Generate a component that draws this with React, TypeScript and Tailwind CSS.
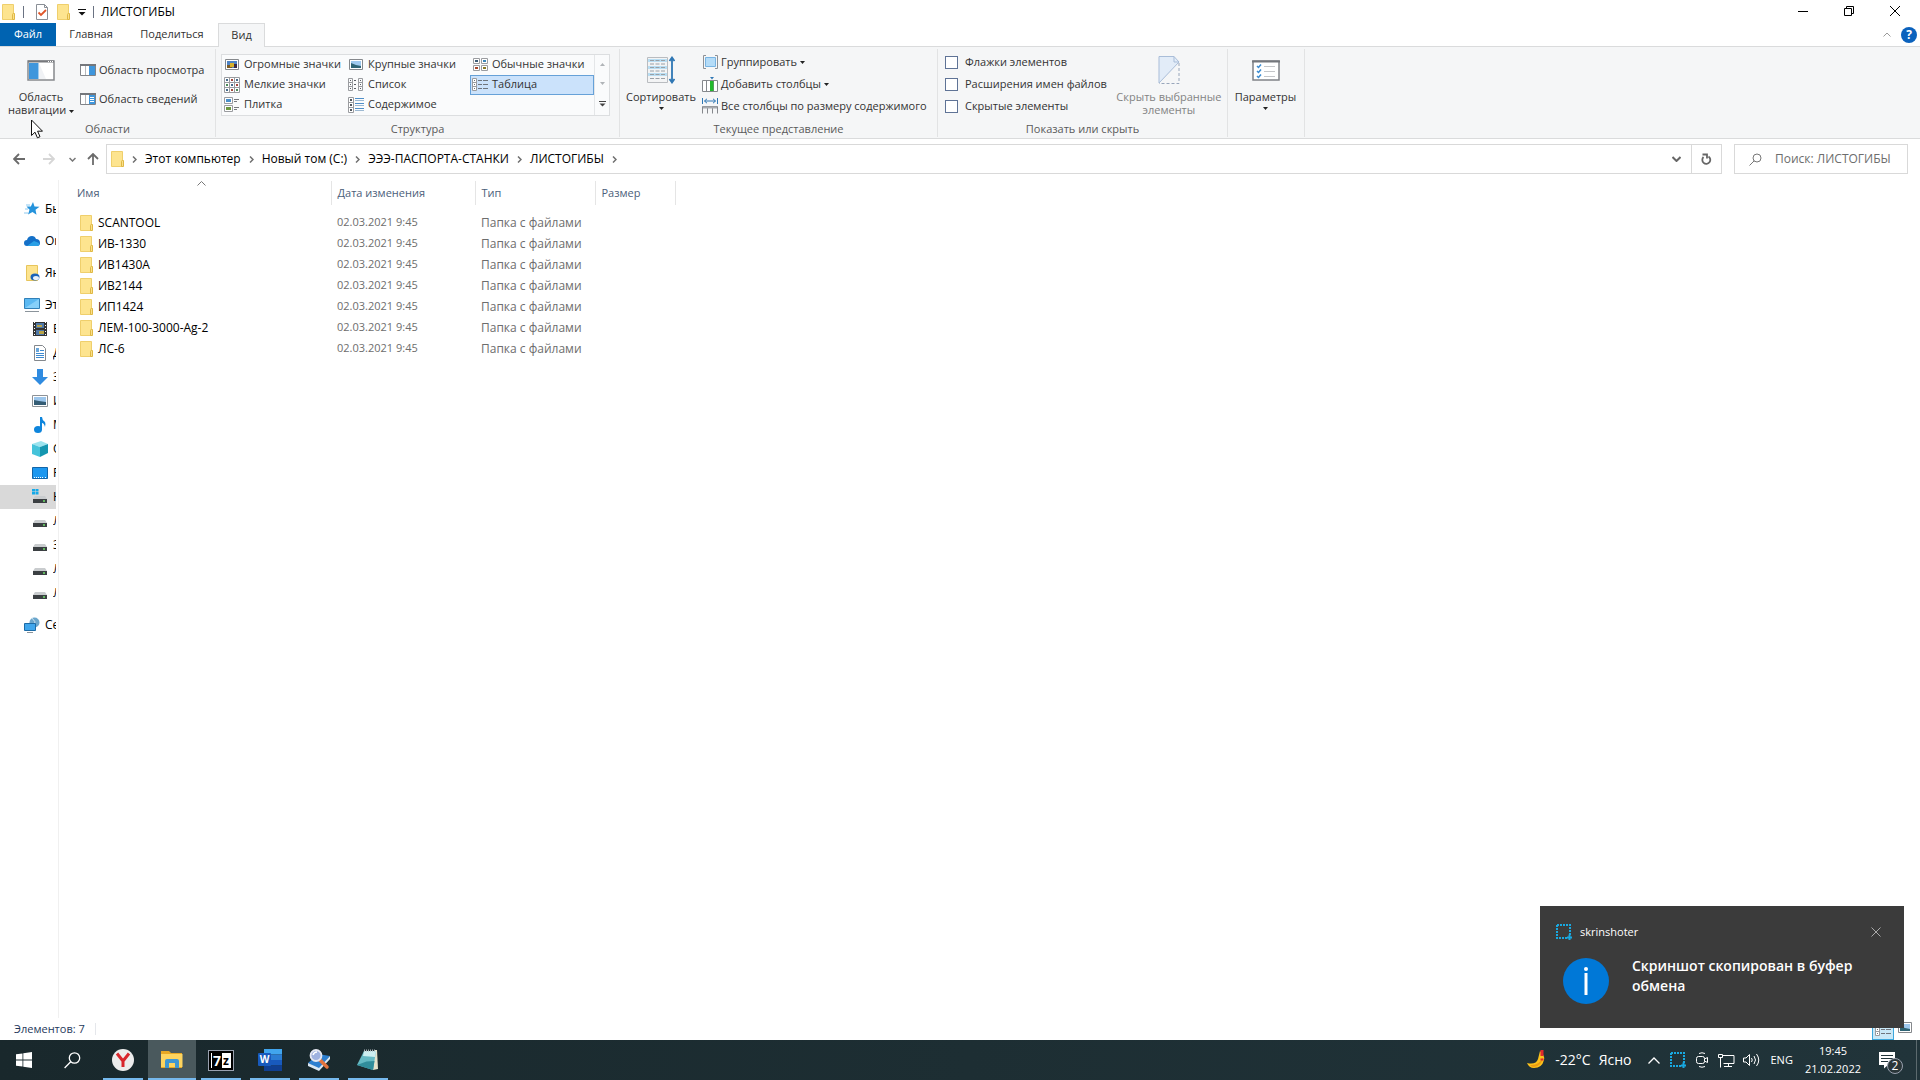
import type { ReactNode } from "react";

const NAV_TOP = [
  { label: "Быстрый доступ", icon: <StarIcon /> },
  { label: "OneDrive", icon: <CloudIcon /> },
  { label: "Яндекс.Диск", icon: <YandexDiskIcon /> },
  { label: "Этот компьютер", icon: <ComputerIcon /> },
];

const NAV_COMPUTER = [
  { label: "Видео", icon: <VideoIcon /> },
  { label: "Документы", icon: <DocumentIcon /> },
  { label: "Загрузки", icon: <DownloadIcon /> },
  { label: "Изображения", icon: <PictureIcon /> },
  { label: "Музыка", icon: <MusicIcon /> },
  { label: "Объемные объекты", icon: <CubeIcon /> },
  { label: "Рабочий стол", icon: <DesktopIcon /> },
  { label: "Новый том (C:)", icon: <DriveIcon system />, selected: true },
  { label: "Локальный диск (D:)", icon: <DriveIcon /> },
  { label: "Зарезервировано", icon: <DriveIcon /> },
  { label: "Локальный диск (F:)", icon: <DriveIcon /> },
  { label: "Локальный диск (G:)", icon: <DriveIcon /> },
];

const FILES = ["SCANTOOL", "ИВ-1330", "ИВ1430А", "ИВ2144", "ИП1424", "ЛЕМ-100-3000-Ag-2", "ЛС-6"];

const CRUMBS = ["Этот компьютер", "Новый том (C:)", "ЭЭЭ-ПАСПОРТА-СТАНКИ", "ЛИСТОГИБЫ"];

const VIEWS = [
  { label: "Огромные значки", icon: <HugeIcon /> },
  { label: "Крупные значки", icon: <LargeIcon /> },
  { label: "Обычные значки", icon: <MediumIcon /> },
  { label: "Мелкие значки", icon: <SmallIcon /> },
  { label: "Список", icon: <ListIcon /> },
  { label: "Таблица", icon: <DetailsIcon />, selected: true },
  { label: "Плитка", icon: <TilesIcon /> },
  { label: "Содержимое", icon: <ContentIcon /> },
];

const App = () => {
  return (
    <div className="relative flex h-screen flex-col overflow-hidden bg-white font-['Open_Sans','Noto_Sans',sans-serif] text-xs text-black">
      <TitleBar />
      <Tabs />
      <Ribbon />
      <AddressBar />
      <div className="flex min-h-0 flex-1">
        <NavPane />
        <FileTable />
      </div>
      <StatusBar />
      <Taskbar />
      <Toast />
      <svg className="absolute left-[31px] top-[119px] h-5 w-3" viewBox="0 0 12 20">
        <path d="M.5 1v15.5l3.5-3.3 2.4 5.6 2.6-1.1-2.4-5.5h4.9z" fill="#fff" stroke="#111" />
      </svg>
    </div>
  );
};

const TitleBar = () => (
  <header className="flex h-[23px] shrink-0 items-center pr-0.5">
    <div className="flex items-center pl-0.5">
      <FolderIcon />
      <span className="ml-2 h-3 w-px bg-gray-500" />
      <button aria-label="Свойства" className="ml-[11px]">
        <svg width="14" height="16" viewBox="0 0 14 16">
          <path d="M1.5.5h8l3 3v12h-11z" fill="#fff" stroke="#8a8f96" />
          <path d="M9.5.5v3h3" fill="none" stroke="#8a8f96" />
          <path d="M3.500 8.500l2.500 2.500 5-5" fill="none" stroke="#e0562a" strokeWidth="1.800" />
        </svg>
      </button>
      <button aria-label="Новая папка" className="ml-2"><FolderIcon /></button>
      <button aria-label="Настройка панели" className="ml-2">
        <svg width="8" height="8" viewBox="0 0 8 8"><path d="M0 1.500h8" stroke="#111" /><path d="M.5 4h7L4 7.500z" fill="#111" /></svg>
      </button>
      <span className="ml-[7px] h-3 w-px bg-gray-500" />
    </div>
    <h1 className="ml-[7px] flex-1 text-xs">ЛИСТОГИБЫ</h1>
    <div className="flex pb-0.5">
      <button aria-label="Свернуть" className="flex w-[46px] justify-center">
        <svg width="10" height="10"><path d="M0 5.500h10" stroke="#000" /></svg>
      </button>
      <button aria-label="Свернуть в окно" className="flex w-[46px] justify-center">
        <svg width="10" height="10" fill="none" stroke="#000"><path d="M.5 2.500h7v7h-7zM2.500 2.500v-2h7v7h-2" /></svg>
      </button>
      <button aria-label="Закрыть" className="flex w-[46px] justify-center">
        <svg width="10" height="10" stroke="#000"><path d="M0 0l10 10M10 0L0 10" /></svg>
      </button>
    </div>
  </header>
);

const Tabs = () => (
  <nav className="flex h-6 shrink-0 border-b border-[#dadbdc] text-[11px] text-[#333]">
    <button className="w-14 bg-[#0063b1] text-white">Файл</button>
    <button className="w-[70px]">Главная</button>
    <button className="w-[92px]">Поделиться</button>
    <button className="-mb-px w-[47px] border border-b-0 border-[#dadbdc] bg-[#f5f6f7]">Вид</button>
    <div className="ml-auto flex items-center gap-2.5 pr-[3px]">
      <button aria-label="Свернуть ленту">
        <svg width="8" height="5" fill="none" stroke="#9a9a9a"><path d="M.5 4.500L4 1l3.500 3.500" /></svg>
      </button>
      <button aria-label="Справка" className="size-4 rounded-full bg-[#0b62bd] text-xs font-bold leading-4 text-white">?</button>
    </div>
  </nav>
);

const Group = ({ label, className, children }: { label: string; className: string; children: ReactNode }) => (
  <section className={`flex shrink-0 flex-col border-r border-[#e2e3e4] ${className}`}>
    <div className="flex flex-1">{children}</div>
    <h2 className="h-4 text-center leading-4 text-[#5a5a5a]">{label}</h2>
  </section>
);

const BigButton = ({ icon, className, disabled, children }: { icon: ReactNode; className: string; disabled?: boolean; children: ReactNode }) => (
  <button disabled={disabled} className={`flex shrink-0 flex-col items-center whitespace-nowrap text-center leading-[13px] disabled:text-[#838383] ${className}`}>
    <span className="mb-1 mt-[5px] flex h-8 items-center">{icon}</span>
    {children}
  </button>
);

const SmallButton = ({ icon, children }: { icon: ReactNode; children: ReactNode }) => (
  <button className="flex h-[22px] items-center gap-[3px] whitespace-nowrap">
    {icon}
    {children}
  </button>
);

const Caret = ({ below }: { below?: boolean }) => (
  <svg width="5" height="3" className={below ? "mt-1" : "inline-block align-middle"}><path d="M0 0h5L2.500 3z" fill="#222" /></svg>
);

const Ribbon = () => (
  <div className="flex h-[92px] shrink-0 border-b border-[#dadbdc] bg-[#f5f6f7] pb-px pt-0.5 text-[11px] text-[#333]">
    <Group label="Области" className="w-[216px]">
      <BigButton icon={<NavPaneIcon />} className="w-20 pl-0.5">
        <span>Область<br />навигации <Caret /></span>
      </BigButton>
      <div className="flex flex-col gap-[7px] pt-2.5">
        <SmallButton icon={<PreviewPaneIcon />}>Область просмотра</SmallButton>
        <SmallButton icon={<PreviewPaneIcon details />}>Область сведений</SmallButton>
      </div>
    </Group>

    <Group label="Структура" className="w-[404px]">
      <div className="ml-[5px] mt-[5px] flex h-[62px] w-[389px] border border-[#dcdee0] bg-[#fafbfc]">
        <div className="grid flex-1 grid-cols-3 grid-rows-3">
          {VIEWS.map((v) => (
            <button
              key={v.label}
              className={`flex items-center gap-1 whitespace-nowrap border pb-px pl-px ${v.selected ? "border-[#66a1d8] bg-[#cbe2fb]" : "border-transparent"}`}
            >
              <span className="flex w-4 shrink-0 justify-center">{v.icon}</span>
              {v.label}
            </button>
          ))}
        </div>
        <div className="flex w-[15px] flex-col items-center justify-around border-l border-[#e4e6e8]">
          <svg width="5" height="3"><path d="M0 3h5L2.500 0z" fill="#b0b4b8" /></svg>
          <svg width="5" height="3"><path d="M0 0h5L2.500 3z" fill="#b0b4b8" /></svg>
          <svg width="7" height="6"><path d="M0 .5h7" stroke="#444" /><path d="M.5 2.500h6l-3 3z" fill="#444" /></svg>
        </div>
      </div>
    </Group>

    <Group label="Текущее представление" className="w-[318px]">
      <BigButton icon={<SortIcon />} className="w-[82px]">
        Сортировать
        <Caret below />
      </BigButton>
      <div className="flex flex-col pt-0.5">
        <SmallButton icon={<GroupByIcon />}>Группировать <Caret /></SmallButton>
        <SmallButton icon={<AddColumnIcon />}>Добавить столбцы <Caret /></SmallButton>
        <SmallButton icon={<FitColumnsIcon />}>Все столбцы по размеру содержимого</SmallButton>
      </div>
    </Group>

    <Group label="Показать или скрыть" className="w-[290px]">
      <div className="flex flex-1 flex-col pl-[7px] pt-0.5">
        {["Флажки элементов", "Расширения имен файлов", "Скрытые элементы"].map((label) => (
          <label key={label} className="flex h-[22px] items-center gap-[7px] whitespace-nowrap">
            <input type="checkbox" className="size-[13px] appearance-none border border-[#5f7396] bg-white" />
            {label}
          </label>
        ))}
      </div>
      <BigButton icon={<HideIcon />} className="w-[124px]" disabled>
        <span>Скрыть выбранные<br />элементы</span>
      </BigButton>
    </Group>

    <Group label="" className="w-[77px]">
      <BigButton icon={<OptionsIcon />} className="w-[75px]">
        Параметры
        <Caret below />
      </BigButton>
    </Group>
  </div>
);

const Chevron = () => (
  <svg width="5" height="7" fill="none" stroke="#707070" strokeWidth="1.500"><path d="M1 .5l3 3-3 3" /></svg>
);

const AddressBar = () => (
  <div className="flex h-[41px] shrink-0 items-center pb-px pr-3">
    <button aria-label="Назад" className="ml-[13px]"><ArrowIcon className="stroke-[#6b6b6b]" /></button>
    <button aria-label="Вперед" className="ml-[18px]"><ArrowIcon className="rotate-180 stroke-[#d6d6d6]" /></button>
    <button aria-label="Последние расположения" className="ml-3.5">
      <svg width="7" height="5" fill="none" stroke="#777" strokeWidth="1.500"><path d="M.5 1l3 3 3-3" /></svg>
    </button>
    <button aria-label="Вверх" className="ml-[11px]"><ArrowIcon className="rotate-90 stroke-[#6b6b6b]" /></button>
    <div className="ml-[7px] flex h-[30px] flex-1 items-center border border-[#d9d9d9]">
      <span className="ml-1 mr-2"><FolderIcon /></span>
      {CRUMBS.map((c) => (
        <span key={c} className="flex items-center">
          <Chevron />
          <button className="px-2">{c}</button>
        </span>
      ))}
      <Chevron />
      <button aria-label="Предыдущие расположения" className="ml-auto mr-2.5">
        <svg width="9" height="6" fill="none" stroke="#666" strokeWidth="2"><path d="M.5 1l4 4 4-4" /></svg>
      </button>
      <button aria-label="Обновить" className="flex h-full w-[30px] items-center justify-center border-l border-[#d9d9d9]">
        <svg width="11" height="12" fill="none" stroke="#666" strokeWidth="1.800">
          <path d="M7.500 3.500a4 4 0 1 1-5 .5" /><path d="M1.500 1.500h4.500v4" />
        </svg>
      </button>
    </div>
    <div className="ml-3 flex h-[30px] w-[174px] items-center border border-[#d9d9d9]">
      <svg className="ml-3.5" width="13" height="13" fill="none" stroke="#777"><circle cx="8" cy="5" r="4" /><path d="M5.200 7.800L.5 12.500" /></svg>
      <input aria-label="Поиск" placeholder="Поиск: ЛИСТОГИБЫ" className="ml-[13px] min-w-0 flex-1 outline-none placeholder:text-[#6d6d6d]" />
    </div>
  </div>
);

const NavItem = ({ icon, label, className }: { icon: ReactNode; label: string; className: string }) => (
  <li className={`flex h-6 items-center gap-[5px] ${className}`}>
    {icon}
    <span className="min-w-0 flex-1 overflow-hidden whitespace-nowrap">{label}</span>
  </li>
);

const NavPane = () => (
  <aside className="w-[59px] shrink-0 border-r border-[#f0f0f0] pr-0.5 pt-[17px]">
    <ul className="flex flex-col gap-2">
      {NAV_TOP.map((n) => (
        <NavItem key={n.label} icon={n.icon} label={n.label} className="pl-6" />
      ))}
    </ul>
    <ul>
      {NAV_COMPUTER.map((n) => (
        <NavItem key={n.label} icon={n.icon} label={n.label} className={n.selected ? "bg-[#d9d9d9] pl-8" : "pl-8"} />
      ))}
    </ul>
    <ul className="mt-2">
      <NavItem icon={<NetworkIcon />} label="Сеть" className="pl-6" />
    </ul>
  </aside>
);

const FileTable = () => (
  <main className="min-w-0 flex-1">
    <table className="mt-px table-fixed text-left">
      <thead className="text-[11px] text-[#4c607a]">
        <tr className="h-6">
          <th className="relative w-[272px] border-r border-[#e5e5e5] pl-[18px] font-normal">
            Имя
            <svg className="absolute left-[138px] top-0" width="9" height="5" fill="none" stroke="#777"><path d="M.5 4.500l4-4 4 4" /></svg>
          </th>
          <th className="w-36 border-r border-[#e5e5e5] pl-1.5 font-normal">Дата изменения</th>
          <th className="w-[120px] border-r border-[#e5e5e5] pl-1.5 font-normal">Тип</th>
          <th className="w-20 border-r border-[#e5e5e5] pl-1.5 font-normal">Размер</th>
        </tr>
      </thead>
      <tbody className="before:block before:h-[7px] text-[#6d6d6d]">
        {FILES.map((name) => (
          <tr key={name} className="h-[21px]">
            <td className="pl-[21px] text-black">
              <span className="flex items-center gap-[5px]"><FolderIcon />{name}</span>
            </td>
            <td className="pl-1.5 text-[11px]">02.03.2021 9:45</td>
            <td className="pl-1.5">Папка с файлами</td>
            <td />
          </tr>
        ))}
      </tbody>
    </table>
  </main>
);

const StatusBar = () => (
  <footer className="flex h-[22px] shrink-0 items-center pl-3.5 pr-2 text-[11px] text-[#1e395b]">
    Элементов: 7
    <span className="ml-2.5 h-3 w-px bg-gray-200" />
    <button aria-label="Таблица" className="ml-auto flex h-full w-[22px] items-center justify-center border border-[#3ba7dd] bg-[#c9e8f7]"><DetailsIcon /></button>
    <button aria-label="Крупные значки" className="ml-1 self-start pt-1"><LargeIcon /></button>
  </footer>
);

const TaskButton = ({ label, active, children }: { label: string; active?: boolean; children: ReactNode }) => (
  <button
    aria-label={label}
    className={`flex h-10 w-12 items-center justify-center ${active ? "border-b-2 border-[#76b9ed] bg-[#4a595d]" : "relative after:absolute after:inset-x-1 after:bottom-0 after:h-0.5 after:bg-[#76b9ed]"}`}
  >
    {children}
  </button>
);

const Taskbar = () => (
  <div className="flex h-10 shrink-0 items-center bg-linear-to-r from-[#19282c] to-[#21343a] text-white">
    <button aria-label="Пуск" className="flex w-12 justify-center">
      <svg width="16" height="16" fill="#fff"><path d="M0 2.300l6.500-.9v6.200H0zM7.300 1.300L16 0v7.600H7.300zM0 8.400h6.500v6.200L0 13.700zM7.300 8.400H16V16l-8.700-1.300z" /></svg>
    </button>
    <button aria-label="Поиск" className="flex w-12 justify-center">
      <svg width="17" height="17" fill="none" stroke="#fff" strokeWidth="1.300"><circle cx="10.500" cy="6" r="5.200" /><path d="M6.700 9.800L.6 16" /></svg>
    </button>
    <div className="ml-[3px] flex gap-px">
      <TaskButton label="Яндекс">
        <svg width="24" height="24">
          <circle cx="12" cy="12" r="11" fill="#ececec" />
          <path d="M6 5.500l6 7.500 6-7.500M12 12.500V19" fill="none" stroke="#d8262c" strokeWidth="3" />
        </svg>
      </TaskButton>
      <TaskButton label="Проводник" active>
        <svg width="22" height="20">
          <path d="M0 2h8l2 2h11v15H0z" fill="#e8a824" />
          <path d="M0 5h21.500v13H0z" fill="#fdd45f" />
          <path d="M4 19v-7q0-2 2-2h10q2 0 2 2v7h-4v-5H8v5z" fill="#3f97d3" />
        </svg>
      </TaskButton>
      <TaskButton label="7-Zip">
        <span className="flex h-[19px] w-6 items-center justify-center border-2 border-black bg-white outline outline-gray-400">
          <b className="h-full w-2.5 bg-black text-center text-sm leading-[15px] text-white">7</b>
          <b className="w-2 text-center leading-[15px] text-black">z</b>
        </span>
      </TaskButton>
      <TaskButton label="Word">
        <svg width="24" height="22">
          <path d="M6 0h18v5.500H6z" fill="#41a5ee" /><path d="M6 5.500h18V11H6z" fill="#2b7cd3" />
          <path d="M6 11h18v5.500H6z" fill="#185abd" /><path d="M6 16.500h18V22H6z" fill="#103f91" />
          <rect y="4" width="13" height="13" rx="1" fill="#185abd" />
          <text x="6.500" y="14" textAnchor="middle" fontSize="10" fontWeight="700" fill="#fff">W</text>
        </svg>
      </TaskButton>
      <TaskButton label="Просмотр">
        <svg width="24" height="24">
          <path d="M1 15L11 6l12 2-11 13z" fill="#2d7fd0" /><path d="M1 15l11 5 11-12v3L12 23 1 18z" fill="#dbe8f4" />
          <path d="M13 12l7 7" stroke="#e2733d" strokeWidth="3.500" strokeLinecap="round" />
          <circle cx="9" cy="7.500" r="5.500" fill="#9fb2e0" stroke="#e6e8f2" strokeWidth="1.800" />
          <path d="M6 7q1-3 4-3" fill="none" stroke="#fff" strokeWidth="1.500" />
        </svg>
      </TaskButton>
      <TaskButton label="Блокнот">
        <svg width="24" height="24">
          <path d="M18 2h3l1 19-5 1z" fill="#e6e2cb" /><path d="M8 3h12l-3 19-16-5z" fill="#66bac4" />
          <path d="M8 3h12l-1 6-12-1z" fill="#cdeef0" /><path d="M1 17l16 5 1.500-9-8 .5z" fill="#318d9b" />
          <path d="M8 2.500h12" stroke="#a7b0b3" strokeWidth="2" strokeDasharray="1 1" />
        </svg>
      </TaskButton>
    </div>

    <div className="ml-auto flex h-full items-center">
      <svg width="20" height="20">
        <path d="M13 1q5 4 4 9-2 8-10 8-5 0-7-5 9 2 11-4 1-4 2-8z" fill="#fcc21b" />
        <path d="M3 15q9 1 13-8-1 9-9 10-3 0-4-2z" fill="#eb9d12" />
        <path d="M15 0v6M15 8.500v2" stroke="#e0282e" strokeWidth="3" />
      </svg>
      <span className="ml-2 text-sm">-22°C</span>
      <span className="ml-2 text-sm">Ясно</span>
      <button aria-label="Скрытые значки" className="ml-[17px]">
        <svg width="12" height="7" fill="none" stroke="#fff" strokeWidth="1.300"><path d="M.5 6.500L6 1l5.500 5.500" /></svg>
      </button>
      <span className="ml-2.5"><ScreenshotIcon /></span>
      <svg className="ml-2.5" width="12" height="16" fill="none" stroke="#fff">
        <path d="M3 1.500q3-1.500 6 0M3 14.500q3 1.500 6 0" /><rect x=".5" y="4.500" width="8" height="7" rx="2" /><path d="M8.500 7l3-1.500v5L8.500 9" />
      </svg>
      <svg className="ml-2.5" width="17" height="15" fill="none" stroke="#fff">
        <path d="M5 2.500h11v8H5.500M10.500 10.500v3M6 13.500h8M.5 1.500h4v3h-4zM2.500 4.500v10" />
      </svg>
      <svg className="ml-2" width="17" height="14" fill="none" stroke="#fff">
        <path d="M.5 5h2.500L6.500 1.500v11L3 9H.5zM8.500 5q1.500 2 0 4M11 3q3 4 0 8M13.500 1q4.500 6 0 12" />
      </svg>
      <span className="ml-2.5 text-[11px]">ENG</span>
      <time className="ml-3 text-center text-[11px] leading-[18px]">19:45<br />21.02.2022</time>
      <button aria-label="Уведомления" className="relative ml-[18px] mr-5">
        <svg width="17" height="17"><path d="M0 0h16v13H9l-4 3.500V13H0z" fill="#fff" /><path d="M2 3.500h12M2 6.500h12M2 9.500h7" stroke="#21343a" /></svg>
        <span className="absolute left-2 top-1.5 size-4 rounded-full border border-gray-400 bg-[#2a3639] text-center text-xs leading-[14px]">2</span>
      </button>
      <span className="h-full w-1 border-l border-[#5c6a6e]" />
    </div>
  </div>
);

const Toast = () => (
  <div role="status" className="absolute bottom-[52px] right-4 h-[122px] w-[364px] bg-[#3b3b3b] px-4 pt-[18px] text-white">
    <div className="flex h-4 items-center">
      <ScreenshotIcon />
      <span className="ml-2 text-[11px]">skrinshoter</span>
      <button aria-label="Закрыть уведомление" className="ml-auto mr-[7px]">
        <svg width="10" height="10" stroke="#aaa"><path d="M.5.5l9 9M9.5.5l-9 9" /></svg>
      </button>
    </div>
    <div className="mt-4 flex pl-[7px]">
      <svg className="mt-0.5 shrink-0" width="46" height="46">
        <circle cx="23" cy="23" r="23" fill="#0078d7" /><path d="M23 15v22" stroke="#fff" strokeWidth="3" /><circle cx="23" cy="11" r="2" fill="#fff" />
      </svg>
      <p className="ml-[23px] mr-6 text-sm font-semibold leading-5">Скриншот скопирован в буфер обмена</p>
    </div>
  </div>
);

/* Icons */

function FolderIcon() {
  return (
    <svg width="13" height="16" viewBox="0 0 13 16" className="shrink-0">
      <path d="M.5.5h11v15H.5z" fill="#fde48f" stroke="#efcf6c" />
      <path d="M10.500 10.500q0-1 1-1h1v6h-2z" fill="#fbe08a" stroke="#dfb845" />
    </svg>
  );
}

function ArrowIcon({ className }: { className: string }) {
  return (
    <svg width="12" height="12" fill="none" strokeWidth="1.800" className={className}><path d="M12 6H1.500M6 1L1 6l5 5" /></svg>
  );
}

function ScreenshotIcon() {
  return (
    <svg width="16" height="16" fill="none" stroke="#18a8e0" className="shrink-0">
      <path d="M1 1h13v10M1 1v13h10" strokeWidth="2" strokeDasharray="2 1" />
      <path d="M13.500 10.500v5.500M11 13.500h5" strokeWidth="2" />
    </svg>
  );
}

function NavPaneIcon() {
  return (
    <svg width="28" height="21">
      <path d="M1 1h26v19H1z" fill="#fff" stroke="#87898d" strokeWidth="1.500" /><path d="M1 1.500h26" stroke="#77797d" strokeWidth="2" />
      <path d="M2 3h9.500v16H2z" fill="#3f96dc" /><path d="M12 3v16h7z" fill="#f0f2f5" />
      <path d="M21 1.500h5" stroke="#fff" strokeDasharray="1 1" />
    </svg>
  );
}

function PreviewPaneIcon({ details }: { details?: boolean }) {
  return (
    <svg width="16" height="12" className="shrink-0">
      <path d="M.5.5h15v11H.5z" fill="#fff" stroke="#808388" /><path d="M0 1h16" stroke="#74777c" strokeWidth="2" />
      <path d="M5.500 2v9" stroke="#b5b8bc" /><path d="M9 2h6v9H9z" fill="#3f96dc" />
      {details && <path d="M10 4.500h4M10 6.500h4M10 8.500h4" stroke="#fff" />}
    </svg>
  );
}

function HugeIcon() {
  return (
    <svg width="14" height="11">
      <path d="M.5.5h13v10H.5z" fill="#fff" stroke="#85888c" /><path d="M2 2h10v7H2z" fill="#4e83c4" />
      <path d="M2 6h5v3H2z" fill="#7b5a22" /><path d="M5 4h4v4H5z" fill="#d8b12c" /><path d="M9 5h3v4H9z" fill="#3a2a46" />
    </svg>
  );
}

function LargeIcon() {
  return (
    <svg width="14" height="11">
      <path d="M.5.5h13v10H.5z" fill="#fff" stroke="#85888c" /><path d="M2 2h10v7H2z" fill="#9fc9ee" />
      <path d="M2 4l5 2 5 1v2H2z" fill="#2f6474" />
    </svg>
  );
}

function MediumIcon() {
  return (
    <svg width="15" height="13">
      <path d="M.5.5h6v5h-6zM8.5.5h6v5h-6zM.5 7.500h6v5h-6zM8.500 7.500h6v5h-6z" fill="#fff" stroke="#9a9ca0" />
      <path d="M2 2h3v2H2z" fill="#3e5c77" /><path d="M10 2h3v2h-3z" fill="#3c87b8" /><path d="M2 9h3v2H2z" fill="#a8462b" /><path d="M10 9h3v2h-3z" fill="#8a7b25" />
    </svg>
  );
}

function SmallIcon() {
  return (
    <svg width="16" height="16">
      <path d="M.5.5h15v15H.5zM5.500.5v15M10.500.5v15M.5 5.500h15M.5 10.500h15" fill="#fff" stroke="#9a9ca0" />
      <path d="M2 3h2M12 3h2M7 8h2M2 13h2" stroke="#456a8a" strokeWidth="2" />
      <path d="M7 3h2M12 8h2M7 13h2" stroke="#a4473b" strokeWidth="2" /><path d="M2 8h2M12 13h2" stroke="#4a8a57" strokeWidth="2" />
    </svg>
  );
}

function ListIcon() {
  return (
    <svg width="16" height="13" fill="none" stroke="#9a9ca0">
      <path d="M.5.5h4v12h-4zM.5 4.500h4M.5 8.500h4M10.500.5h4v12h-4zM10.500 4.500h4M10.500 8.500h4" />
      <path d="M2 2.500h1M2 6.500h1M2 10.500h1M12 2.500h1M12 6.500h1M12 10.500h1M6 2.500h2M6 6.500h2M6 10.500h2" stroke="#5b5e63" />
    </svg>
  );
}

function DetailsIcon() {
  return (
    <svg width="16" height="13" fill="none" stroke="#9a9ca0">
      <path d="M.5.5h4v12h-4zM.5 4.500h4M.5 8.500h4" fill="#fff" />
      <path d="M2 2.500h1M2 6.500h1M2 10.500h1M6 2.500h4M11 2.500h5M6 6.500h4M11 6.500h5M6 10.500h4M11 10.500h5" stroke="#6f757d" />
    </svg>
  );
}

function TilesIcon() {
  return (
    <svg width="16" height="15">
      <path d="M.5.5h8v6h-8zM.5 8.500h8v6h-8z" fill="#fff" stroke="#9a9ca0" />
      <path d="M2 2h5v3H2z" fill="#4a8fc9" /><path d="M2 10h5v3H2z" fill="#6d9840" />
      <path d="M10 2.500h5M10 4.500h3M10 10.500h5M10 12.500h3" stroke="#77797d" />
    </svg>
  );
}

function ContentIcon() {
  return (
    <svg width="16" height="16">
      <path d="M.5.5h5v15h-5zM.5 5.500h5M.5 10.500h5" fill="#fff" stroke="#9a9ca0" />
      <path d="M2 3h2M2 8h2M2 13h2" stroke="#50565e" strokeWidth="2" />
      <path d="M7 1.500h9M7 6.500h9M7 11.500h9" stroke="#4f8fc9" /><path d="M7 3.500h9M7 8.500h9M7 13.500h9" stroke="#9db9d2" />
    </svg>
  );
}

function SortIcon() {
  return (
    <svg width="28" height="28">
      <path d="M.5 1.500h20v25H.5z" fill="#f3f4f5" stroke="#b9bcc0" />
      <path d="M1 4.500h19M1 11.500h19M1 18.500h19" stroke="#b9def3" strokeWidth="3" />
      <path d="M3 4.500h15M3 8h15M3 11.500h15M3 15h15M3 18.500h15M3 22.500h15" stroke="#9aa0a6" strokeDasharray="4 1.500" />
      <path d="M25 3v22M22.500 5L25 1.500 27.500 5M22.500 23l2.500 3.500 2.500-3.500" fill="none" stroke="#2f77b4" strokeWidth="1.800" />
    </svg>
  );
}

function GroupByIcon() {
  return (
    <svg width="16" height="14" fill="none">
      <path d="M4 .5H1.500v13H4M13 .5h2.500v13H13" stroke="#8d9196" /><path d="M3.500 2.500h10v9h-10z" fill="#b4dcf8" stroke="#79b4e2" />
    </svg>
  );
}

function AddColumnIcon() {
  return (
    <svg width="16" height="15">
      <path d="M.5 3.500h15v11H.5zM4.500 3.500v11M11.500 3.500v11" fill="#fff" stroke="#85888c" />
      <path d="M8 4h3.500v10H8z" fill="#22b82c" /><path d="M8 0h4l-2 2.500z" fill="#2f77b4" />
    </svg>
  );
}

function FitColumnsIcon() {
  return (
    <svg width="16" height="16" fill="none">
      <path d="M.5 0v6M15.500 0v6M2.500 3h11M5 .8L2.500 3 5 5.200M11 .8L13.500 3 11 5.200" stroke="#2f77b4" />
      <path d="M.5 8.500h15v7M.5 8.500v7M5.500 10v5.500M10.500 10v5.500" stroke="#85888c" /><path d="M1 9.500h14" stroke="#a7aaae" strokeWidth="2" />
    </svg>
  );
}

function HideIcon() {
  return (
    <svg width="22" height="28" fill="none">
      <path d="M1 27V.5h15l5 5.500z" fill="#e2ecf8" stroke="#a9bdd8" /><path d="M16 .5v5.500h5" stroke="#a9bdd8" />
      <path d="M21 7v20.500H1" stroke="#98a6bb" strokeDasharray="3 2" />
    </svg>
  );
}

function OptionsIcon() {
  return (
    <svg width="28" height="21" fill="none">
      <path d="M1 1h26v19H1z" fill="#fff" stroke="#808388" strokeWidth="1.500" /><path d="M0 1.500h28" stroke="#74777c" strokeWidth="2" />
      <path d="M5 6l1.500 1.500L9 4.500M5 11l1.500 1.500L9 9.500M5 16l1.500 1.500L9 14.500" stroke="#3b8bd0" strokeWidth="1.500" />
      <path d="M12 6.500h11M12 11.500h11M12 16.500h11" stroke="#c4c6c9" />
    </svg>
  );
}

function StarIcon() {
  return (
    <svg width="16" height="16" className="shrink-0">
      <path d="M9 1l1.500 4.500 5 .3-4 3 1 5-4-2.800-4.500 2.500 1.500-4.700-3-3.300h4.300z" fill="#2593dc" /><path d="M2 4h4M1 8h3M0 12h4" stroke="#8cc8ee" />
    </svg>
  );
}

function CloudIcon() {
  return (
    <svg width="16" height="16" className="shrink-0">
      <path d="M3 13Q0 13 0 10q0-3 3-3 1-4 5-4 3 0 4 3 4 0 4 4 0 3-3 3z" fill="#1470c8" /><path d="M3 13l7-5 5 2q1 3-2 3z" fill="#2aa0e6" />
    </svg>
  );
}

function YandexDiskIcon() {
  return (
    <svg width="16" height="16" className="shrink-0">
      <path d="M2.500.5h11v15h-11z" fill="#fde48f" stroke="#e7c55c" /><ellipse cx="11" cy="12" rx="4.500" ry="3.500" fill="#1b63b8" /><ellipse cx="12" cy="13" rx="3" ry="2" fill="#e8f1fb" />
    </svg>
  );
}

function ComputerIcon() {
  return (
    <svg width="16" height="16" className="shrink-0">
      <path d="M.5 1.500h15v10H.5z" fill="#5cb9f2" stroke="#3180b8" /><path d="M1 11L15 2v9z" fill="#86d0fa" /><path d="M1 14.500h14" stroke="#8b949b" />
    </svg>
  );
}

function VideoIcon() {
  return (
    <svg width="16" height="16" className="shrink-0">
      <path d="M1 1h14v14H1z" fill="#333" /><path d="M4 2h8v5H4zM4 9h8v5H4z" fill="#4f78a8" /><path d="M5 4h5v2H5zM7 10h5v3H7z" fill="#b9a346" />
      <path d="M2.500 1v14M13.500 1v14" stroke="#fff" strokeDasharray="1 2" />
    </svg>
  );
}

function DocumentIcon() {
  return (
    <svg width="16" height="16" className="shrink-0">
      <path d="M2.500.5h8l3 3v12h-11z" fill="#fff" stroke="#84888d" /><path d="M4 8.500h8M4 10.500h8M4 12.500h8M8 5.500h4" stroke="#3d8ad0" /><path d="M4 3h3v4H4z" fill="#69a7dc" />
    </svg>
  );
}

function DownloadIcon() {
  return <svg width="16" height="16" className="shrink-0"><path d="M5 0h6v8h5l-8 8-8-8h5z" fill="#2f8be0" /></svg>;
}

function PictureIcon() {
  return (
    <svg width="16" height="16" className="shrink-0">
      <path d="M.5 2.500h15v11H.5z" fill="#fff" stroke="#8d9297" /><path d="M2 4h12v8H2z" fill="#9cc6ec" /><path d="M2 7l5 1 7 1v3H2z" fill="#355d75" />
    </svg>
  );
}

function MusicIcon() {
  return (
    <svg width="16" height="16" className="shrink-0"><ellipse cx="6" cy="12.500" rx="4" ry="3.500" fill="#0e85dc" /><path d="M8 0h2q0 3 3 5 1 2 0 5-1-4-3-4v7H8z" fill="#0e85dc" /></svg>
  );
}

function CubeIcon() {
  return (
    <svg width="16" height="16" className="shrink-0"><path d="M0 3l9-3 7 3-8 3z" fill="#9be3ee" /><path d="M0 3l8 3v10l-8-3z" fill="#45c3da" /><path d="M8 6l8-3v9l-8 4z" fill="#1496b0" /></svg>
  );
}

function DesktopIcon() {
  return (
    <svg width="16" height="16" className="shrink-0"><path d="M.5 2.500h15v11H.5z" fill="#1c98f0" stroke="#1265a8" /><path d="M2 12.500h10M13 12.500h1" stroke="#fff" strokeDasharray="1 1" /></svg>
  );
}

function DriveIcon({ system }: { system?: boolean }) {
  return (
    <svg width="16" height="16" className="shrink-0">
      <path d="M3 7h10l2 3H1z" fill="#c9ccce" /><path d="M1 10h14v4H1z" fill="#3b3f42" /><path d="M11 12h2" stroke="#6fe06a" strokeWidth="1.500" />
      {system && <path d="M0 0h3v2.500H0zM3.500 0h3v2.500h-3zM0 3h3v2.500H0zM3.500 3h3v2.500h-3z" fill="#15a9e8" />}
    </svg>
  );
}

function NetworkIcon() {
  return (
    <svg width="16" height="16" className="shrink-0">
      <circle cx="10.500" cy="5.500" r="5" fill="#6ba6cc" /><path d="M8 1q4 3 3 8" stroke="#cfe3ef" fill="none" />
      <path d="M.5 6.500h11v7H.5z" fill="#3fa6ec" stroke="#1c6ba6" /><path d="M3 15.500h6" stroke="#8b949b" />
    </svg>
  );
}

export default App;
